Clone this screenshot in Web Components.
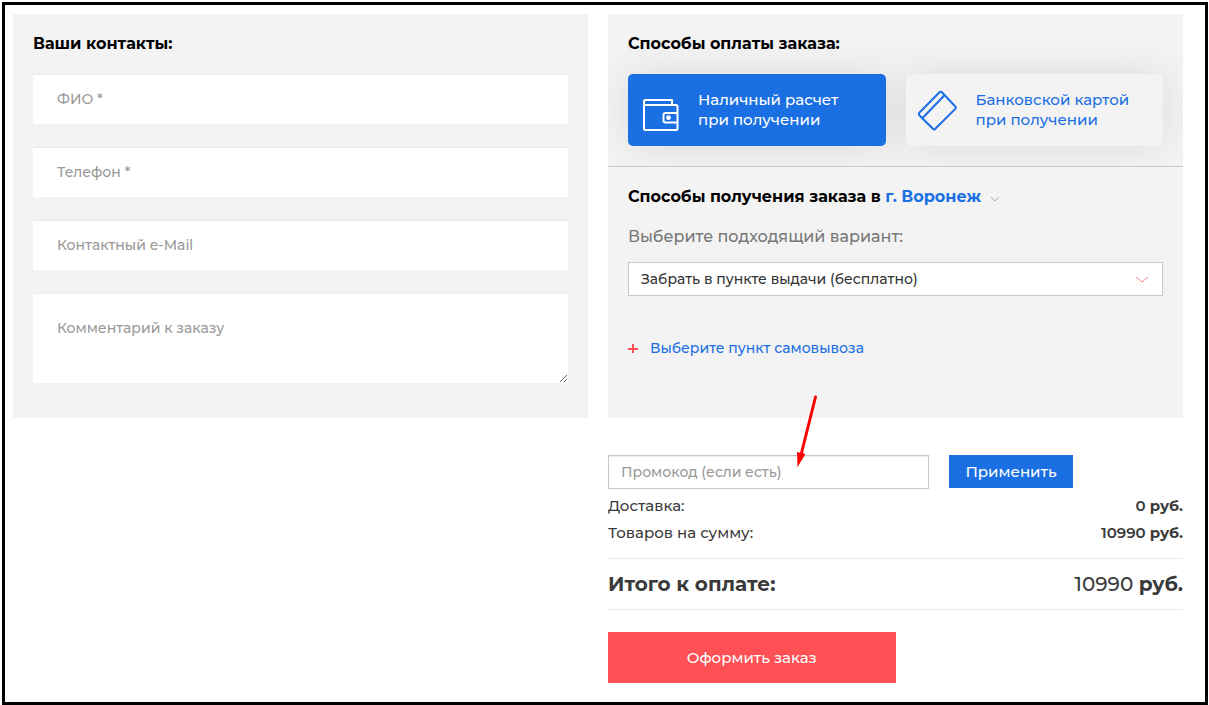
<!DOCTYPE html>
<html lang="ru">
<head>
<meta charset="utf-8">
<meta name="viewport" content="width=device-width, initial-scale=1">
<title>Оформление заказа</title>
<style>
  html { background: #fff; }
  body {
    margin: 0;
    font-family: Montserrat, Inter, "Open Sans", "Liberation Sans", sans-serif;
    font-size: 14px;
    font-weight: 500;
    color: #3a3a3a;
    --blue: #1a6fe3;
    --red: #ff5055;
    --panel: #f3f3f3;
    --line: #c8c8c8;
  }
</style>
</head>
<body>
<order-frame>
  <order-panel heading="Ваши контакты:">
    <contact-fields></contact-fields>
  </order-panel>
  <div slot="order">
    <order-panel heading="Способы оплаты заказа:" divided>
      <payment-options></payment-options>
      <delivery-options slot="next"></delivery-options>
    </order-panel>
  </div>
  <order-summary slot="summary">
    <promo-form></promo-form>
    <sum-row label="Доставка:" amount="0"></sum-row>
    <sum-row label="Товаров на сумму:" amount="10990"></sum-row>
    <sum-row total label="Итого к оплате:" amount="10990"></sum-row>
  </order-summary>
</order-frame>

<script>
const define = (name, html, setup) => {
  const template = document.createElement("template");
  template.innerHTML = `<style>*{box-sizing:border-box}:host{display:block;box-sizing:border-box}</style>` + html;
  customElements.define(name, class extends HTMLElement {
    constructor() {
      super();
      this.attachShadow({ mode: "open" }).append(template.content.cloneNode(true));
    }
    connectedCallback() { if (setup) setup(this, this.shadowRoot); }
  });
};

define("order-frame", `
  <style>
    :host { padding: 2px 1px 0 2px; }
    main {
      display: grid;
      grid-template-columns: minmax(0, 1fr) minmax(0, 1fr);
      grid-template-rows: auto 1fr;
      column-gap: 20px;
      min-height: calc(100vh - 2px);
      padding: 9px 22px 19px 8px;
      border: 3px solid #000;
    }
    ::slotted(*) { grid-column: 2; display: grid; }
    slot:not([name])::slotted(*) { grid-column: 1; grid-row: 1; }
  </style>
  <main><slot></slot><slot name="order"></slot><slot name="summary"></slot></main>`);

define("order-panel", `
  <style>
    :host { background: var(--panel); display: flow-root; }
    h2 { margin: 0 0 20px; font-size: 16px; line-height: 20px; font-weight: 700; color: #000; }
    .body { padding: 20px; overflow: hidden; }
    :host(:not([divided])) .body { padding-bottom: 35px; }
    :host([divided]) .body { border-bottom: 1px solid var(--line); }
  </style>
  <section class="body"><h2></h2><slot></slot></section>
  <slot name="next"></slot>`,
  (el, root) => { root.querySelector("h2").textContent = el.getAttribute("heading"); });

define("contact-fields", `
  <style>
    form { display: grid; gap: 23px; }
    input, textarea {
      display: block; width: 100%; margin: 0; padding: 0 24px 2px; height: 50px;
      border: 0; border-top: 1px solid #eaeaea; border-radius: 0;
      background: #fff; color: #3a3a3a; font: inherit; line-height: 20px; outline: 0;
    }
    textarea { height: 90px; padding: 24px; resize: vertical; }
    ::placeholder { color: #999; opacity: 1; }
  </style>
  <form>
    <input type="text" aria-label="ФИО" placeholder="ФИО *" required>
    <input type="tel" aria-label="Телефон" placeholder="Телефон *" required>
    <input type="email" aria-label="Контактный e-Mail" placeholder="Контактный e-Mail">
    <textarea aria-label="Комментарий к заказу" placeholder="Комментарий к заказу"></textarea>
  </form>`);

define("payment-options", `
  <style>
    fieldset {
      display: grid; grid-template-columns: 1fr 1fr; gap: 20px;
      margin: 0; padding: 0; border: 0;
    }
    label {
      position: relative; display: flex; align-items: center; gap: 16px;
      height: 72px; padding: 0 12px; border-radius: 5px; cursor: pointer;
      background: var(--panel); color: var(--blue);
      box-shadow: 0 0 40px rgba(0, 0, 0, .1);
      font-size: 15px; line-height: 20px;
    }
    label:has(:checked) { background: var(--blue); color: #fff; }
    input { position: absolute; opacity: 0; margin: 0; }
    svg { flex: none; width: 42px; height: 42px; fill: none; stroke: currentColor; stroke-width: 2; stroke-linejoin: round; stroke-linecap: round; }
  </style>
  <fieldset aria-label="Способы оплаты заказа">
    <label>
      <input type="radio" name="pay" value="cash" checked>
      <svg viewBox="0 0 42 42" aria-hidden="true">
        <path d="M32 16V11H5.500Q4 11 4 12.500V39.500Q4 41 5.500 41H36Q37.500 41 37.500 39.500V17.500Q37.500 16 36 16H4M37.500 24H25.500Q23.500 24 23.500 26V31.500Q23.500 33.500 25.500 33.500H37.500"/>
        <circle cx="28.500" cy="28.700" r="2.400" fill="currentColor" stroke="none"/>
      </svg>
      <span>Наличный расчет<br>при получении</span>
    </label>
    <label>
      <input type="radio" name="pay" value="card">
      <svg viewBox="0 0 42 42" aria-hidden="true">
        <path d="M21.500 3.300Q22.700 2.200 23.900 3.300L37.300 17.500Q38.300 18.700 37.300 19.900L17.300 39.800Q16.100 41 14.900 39.800L1.300 26.200Q.2 25 1.300 23.800ZM26.500 6.300L5 28.500"/>
      </svg>
      <span>Банковской картой<br>при получении</span>
    </label>
  </fieldset>`);

define("delivery-options", `
  <style>
    :host { padding: 20px; }
    h2 { margin: 0; font-size: 16px; line-height: 20px; font-weight: 700; color: #000; }
    a { color: var(--blue); text-decoration: none; }
    h2 svg { width: 10px; height: 6px; margin-left: 4px; }
    svg { fill: none; stroke: #aaa; }
    .hint { display: block; margin: 20px 0 15px; font-size: 16px; line-height: 20px; color: #777; }
    .select { display: grid; align-items: center; }
    .select > * { grid-area: 1 / 1; }
    .select svg { width: 12px; height: 7px; justify-self: end; margin-right: 15px; stroke: #ff7b80; pointer-events: none; }
    select {
      appearance: none; width: 100%; height: 34px; margin: 0; padding: 0 12px;
      border: 1px solid var(--line); border-radius: 0; background: #fff;
      color: #333; font: inherit;
    }
    .pickup { display: flex; align-items: center; gap: 12px; margin-top: 42px; line-height: 20px; }
    .pickup svg { width: 10px; height: 10px; stroke: var(--red); stroke-width: 2; }
  </style>
  <h2>Способы получения заказа в <a href="#city">г. Воронеж</a>
    <svg viewBox="0 0 10 6" aria-hidden="true"><path d="M1 1L5 5L9 1"/></svg></h2>
  <label class="hint" for="method">Выберите подходящий вариант:</label>
  <div class="select">
    <select id="method"><option>Забрать в пункте выдачи (бесплатно)</option></select>
    <svg viewBox="0 0 12 7" aria-hidden="true"><path d="M0 1L6 6L12 1"/></svg>
  </div>
  <div class="pickup">
    <svg viewBox="0 0 10 10" aria-hidden="true"><path d="M5 1V10M0 6H10"/></svg>
    <a href="#pickup">Выберите пункт самовывоза</a>
  </div>`);

define("promo-form", `
  <style>
    :host { position: relative; margin: 37px 0 3px; }
    form { display: grid; grid-template-columns: 1fr 124px 90px; align-items: start; column-gap: 20px; }
    input {
      width: 100%; height: 34px; margin: 0; padding: 0 12px;
      border: 1px solid var(--line); border-radius: 0; background: #fff;
      box-shadow: inset 0 1px 1px rgba(0, 0, 0, .08); color: #3a3a3a; font: inherit;
    }
    ::placeholder { color: #999; opacity: 1; }
    button {
      height: 33px; padding: 0; border: 0;
      background: var(--blue); color: #fff; font: inherit; font-size: 15px;
    }
    svg { position: absolute; left: 185px; top: -60px; width: 26px; height: 74px; pointer-events: none; }
  </style>
  <form>
    <input type="text" aria-label="Промокод" placeholder="Промокод (если есть)">
    <button type="button">Применить</button>
  </form>
  <svg viewBox="0 0 26 74" aria-hidden="true">
    <path d="M22.500 2L8 60" stroke="#f00" stroke-width="3" stroke-linecap="round"/>
    <path d="M4 57L12.500 59L4.500 72Z" fill="#f00"/>
  </svg>`);

define("sum-row", `
  <style>
    :host { display: flex; justify-content: space-between; font-size: 15px; line-height: 27px; }
    :host([total]) {
      margin: 12px 0 22px; font-size: 20px; line-height: 50px;
      border: solid #eaeaea; border-width: 1px 0;
    }
    :host([total]) .label, b { font-weight: 700; }
    :host(:not([total])) .amount { font-weight: 600; }
  </style>
  <span class="label"></span><span class="sum"><span class="amount"></span> <b>руб.</b></span>`,
  (el, root) => {
    root.querySelector(".label").textContent = el.getAttribute("label");
    root.querySelector(".amount").textContent = el.getAttribute("amount");
  });

define("order-summary", `
  <style>
    :host { align-content: start; }
    button {
      display: block; width: 50%; height: 51px; padding: 0; border: 0;
      background: var(--red); color: #fff; font: inherit; font-size: 15px;
    }
  </style>
  <slot></slot>
  <button type="submit">Оформить заказ</button>`);
</script>
</body>
</html>
